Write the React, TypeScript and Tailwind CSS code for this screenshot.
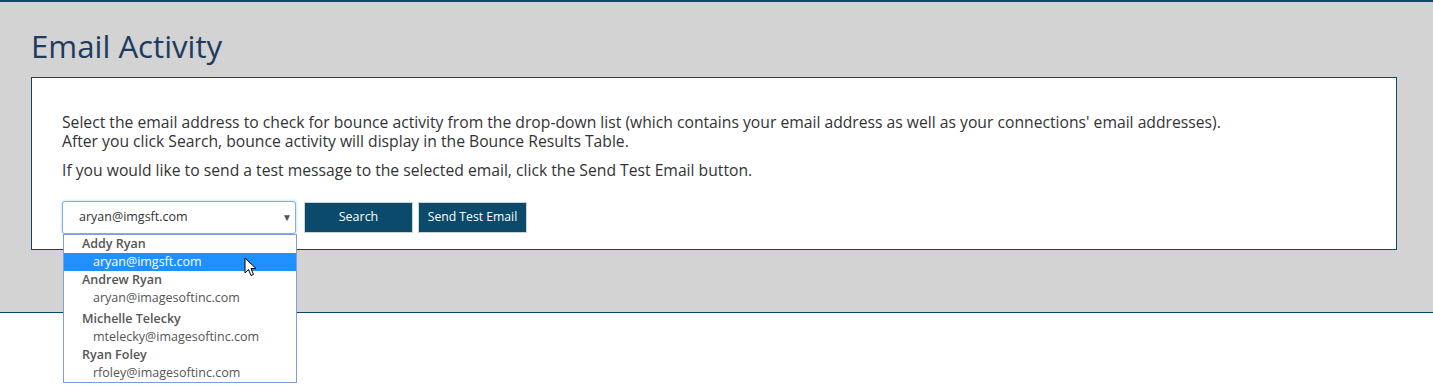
import React from 'react';

const font = { fontFamily: '"Open Sans", "Liberation Sans", sans-serif' };

type Group = { name: string; emails: string[] };

const groups: Group[] = [
  { name: 'Addy Ryan', emails: ['aryan@imgsft.com'] },
  { name: 'Andrew Ryan', emails: ['aryan@imagesoftinc.com'] },
  { name: 'Michelle Telecky', emails: ['mtelecky@imagesoftinc.com'] },
  { name: 'Ryan Foley', emails: ['rfoley@imagesoftinc.com'] },
];

const selected = 'aryan@imgsft.com';

function Cursor() {
  return (
    <svg width="14" height="21" viewBox="0 0 14 21" className="absolute left-[244px] top-[257px]">
      <path
        d="M1 1 L1 16 L4.5 12.5 L7 18.5 L9.5 17.5 L7 11.5 L12 11.5 Z"
        fill="#fff"
        stroke="#000"
        strokeWidth="1"
        strokeLinejoin="round"
      />
    </svg>
  );
}

export default function App() {
  return (
    <div className="relative min-h-[385px] bg-white" style={font}>
      <div className="border-t-2 border-b border-[#0b4a66] bg-[#d3d3d3] h-[313px] pl-[31px] pr-[36px]">
        <h1 className="pt-[22px] text-[31.2px] leading-[44px] text-[#1d3b5e]">Email Activity</h1>
        <div className="mt-[9px] h-[173px] border border-[#0b4a66] bg-white pl-[30px] pt-[35px] text-[15.7px] text-[#333]">
          <div className="h-[19px] leading-[19px]">
            Select the email address to check for bounce activity from the drop-down list (which contains your email address as well as your connections' email addresses).
          </div>
          <div className="h-[19px] leading-[19px]">
            After you click Search, bounce activity will display in the Bounce Results Table.
          </div>
          <div className="mt-[10px] h-[19px] leading-[19px]">
            If you would like to send a test message to the selected email, click the Send Test Email button.
          </div>
          <div className="mt-[21px] flex items-center gap-[5px]">
            <div className="relative flex h-[33px] w-[234px] items-center rounded-[3px] border border-[#7fb0e4] bg-white pl-[16px] text-[12.5px] text-[#333] shadow-[0_0_3px_rgba(102,175,233,0.6)]">
              {selected}
              <span className="absolute right-[3px] top-[8px] text-[10px] text-[#555]">▼</span>
            </div>
            <button className="ml-[3px] h-[31px] w-[109px] border border-[#c9d3d8] bg-[#0b4a6a] text-[12.5px] text-white">
              Search
            </button>
            <button className="h-[31px] w-[109px] border border-[#c9d3d8] bg-[#0b4a6a] text-[12.2px] text-white">
              Send Test Email
            </button>
          </div>
        </div>
      </div>

      <div className="absolute left-[63px] top-[234px] w-[234px] border border-[#7f9ed6] bg-white text-[12.5px]">
        {groups.map((g, i) => (
          <div key={g.name} className={i === 2 ? 'mt-[3px]' : ''}>
            <div className="h-[18px] pl-[18px] font-semibold leading-[18px] text-[#555]">{g.name}</div>
            {g.emails.map((e) => (
              <div
                key={e}
                className={
                  e === selected
                    ? 'h-[18px] bg-[#1e90ff] pl-[29px] leading-[18px] text-white'
                    : 'h-[18px] pl-[29px] leading-[18px] text-[#555]'
                }
              >
                {e}
              </div>
            ))}
          </div>
        ))}
      </div>
      <Cursor />
    </div>
  );
}
